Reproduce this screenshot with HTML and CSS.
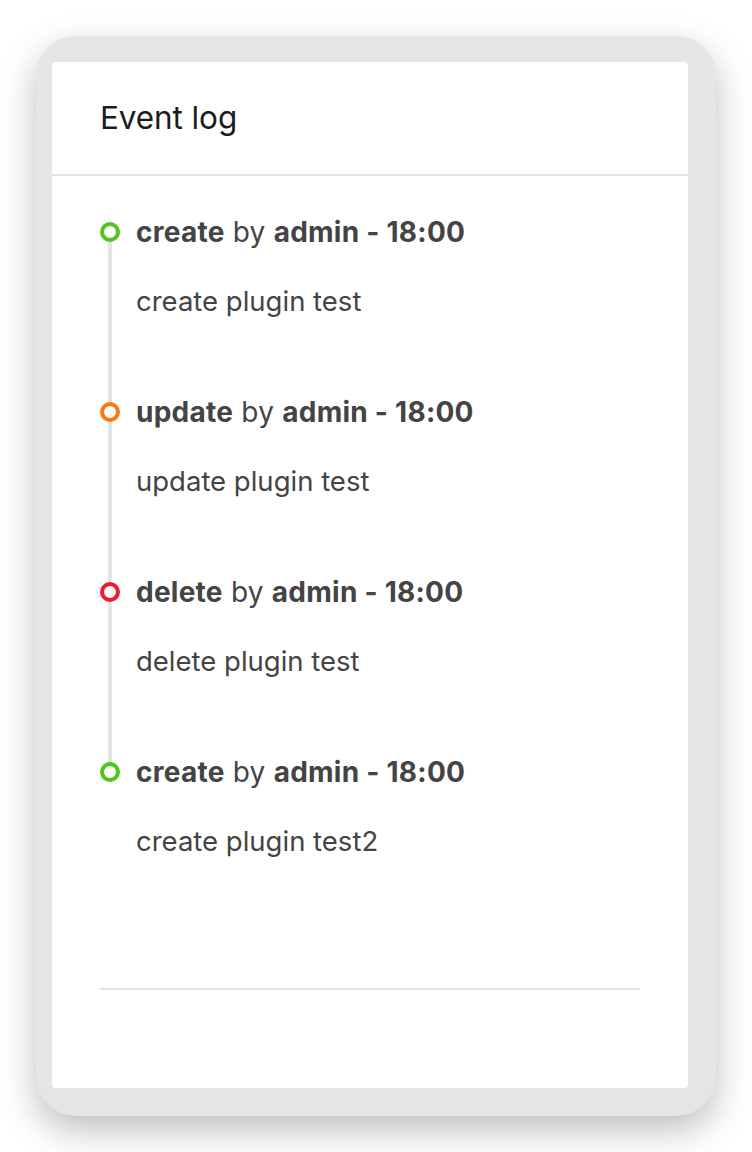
FILE: index.html
```html
<!DOCTYPE html>
<html lang="en">
<head>
<meta charset="utf-8">
<title>Event log</title>
<link rel="stylesheet" href="styles.css">
</head>
<body>
<div class="frame">
  <div class="card">
    <div class="card-header">
      <h1 class="title">Event log</h1>
    </div>
    <div class="card-body">
      <ul class="timeline">
        <li class="item">
          <div class="rail"><span class="dot dot-green"></span><span class="tail"></span></div>
          <div class="content">
            <div class="head"><b>create</b> by <b>admin - 18:00</b></div>
            <div class="desc">create plugin test</div>
          </div>
        </li>
        <li class="item">
          <div class="rail"><span class="dot dot-orange"></span><span class="tail"></span></div>
          <div class="content">
            <div class="head"><b>update</b> by <b>admin - 18:00</b></div>
            <div class="desc">update plugin test</div>
          </div>
        </li>
        <li class="item">
          <div class="rail"><span class="dot dot-red"></span><span class="tail"></span></div>
          <div class="content">
            <div class="head"><b>delete</b> by <b>admin - 18:00</b></div>
            <div class="desc">delete plugin test</div>
          </div>
        </li>
        <li class="item item-last">
          <div class="rail"><span class="dot dot-green"></span></div>
          <div class="content">
            <div class="head"><b>create</b> by <b>admin - 18:00</b></div>
            <div class="desc">create plugin test2</div>
          </div>
        </li>
      </ul>
      <hr class="divider">
    </div>
  </div>
</div>
</body>
</html>
```
FILE: styles.css
```css
html, body {
  margin: 0;
  padding: 0;
  background: #ffffff;
}
body {
  font-family: Inter, "Noto Sans", "Liberation Sans", sans-serif;
  color: #444444;
  padding: 36px 0 36px 36px;
}
.frame {
  box-sizing: border-box;
  width: 680px;
  height: 1080px;
  padding: 26px 28px 28px 16px;
  background: #e5e5e5;
  border-radius: 40px;
  box-shadow: 0 14px 36px rgba(0, 0, 0, 0.26);
}
.card {
  box-sizing: border-box;
  height: 100%;
  background: #ffffff;
  border-radius: 4px;
  display: flex;
  flex-direction: column;
}
.card-header {
  height: 112px;
  border-bottom: 2px solid #e2e2e2;
  display: flex;
  align-items: center;
  padding: 0 48px;
}
.title {
  margin: 0;
  font-size: 31.5px;
  font-weight: 400;
  line-height: 36px;
  color: #1c1c1c;
  letter-spacing: -0.1px;
}
.card-body {
  padding: 46px 48px 0 48px;
}
.timeline {
  list-style: none;
  margin: 0;
  padding: 0;
}
.item {
  display: flex;
  gap: 16px;
}
.rail {
  width: 20px;
  display: flex;
  flex-direction: column;
  align-items: center;
  flex: none;
}
.dot {
  box-sizing: border-box;
  width: 20px;
  height: 20px;
  border-radius: 50%;
  border: 4px solid #52c41a;
  background: #fff;
  flex: none;
}
.dot-green { border-color: #52c41a; }
.dot-orange { border-color: #fa7a10; }
.dot-red { border-color: #ec1b2e; }
.tail {
  width: 4px;
  flex: 1;
  background: #e3e3e3;
}
.content {
  padding-bottom: 85px;
}
.item-last .content {
  padding-bottom: 0;
}
.head {
  font-size: 28px;
  line-height: 20px;
  height: 20px;
  white-space: nowrap;
  color: #444;
  letter-spacing: 0.25px;
}
.head b {
  font-weight: 700;
}
.desc {
  margin-top: 43px;
  font-size: 27.5px;
  line-height: 32px;
  color: #444;
}
.divider {
  margin: 131px 0 0 0;
  border: 0;
  height: 2px;
  background: #e2e2e2;
}
```
